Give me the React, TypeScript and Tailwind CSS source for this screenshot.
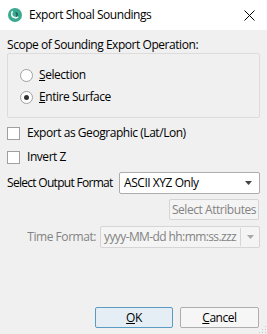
const font = { fontFamily: '"Segoe UI", "Open Sans", "Noto Sans", sans-serif', letterSpacing: '-0.45px' };

function Radio({ checked, label, u }: { checked?: boolean; label: string; u: string }) {
  return (
    <div className="flex items-center h-[22px]">
      <span className="w-[13px] h-[13px] rounded-full border border-[#a0a0a0] bg-white flex items-center justify-center">
        {checked && <span className="w-[5px] h-[5px] rounded-full bg-[#333]" />}
      </span>
      <span className="ml-[6px] text-[#000]">
        <span className="underline">{u}</span>
        {label}
      </span>
    </div>
  );
}

function Check({ label }: { label: string }) {
  return (
    <div className="flex items-center h-[24px]">
      <span className="w-[13px] h-[13px] border border-[#a0a0a0] bg-white" />
      <span className="ml-[7px]">{label}</span>
    </div>
  );
}

function Caret({ color }: { color: string }) {
  return (
    <svg width="7" height="4" viewBox="0 0 7 4">
      <path d="M0 0h7L3.5 4z" fill={color} />
    </svg>
  );
}

export default function App() {
  return (
    <div className="relative w-[267px] h-[334px] bg-[#f0f0f0] flex flex-col text-[12px] text-black whitespace-nowrap" style={font}>
      <div className="h-[30px] bg-white flex items-center pl-[8px] pr-[12px]">
        <svg width="14" height="14" viewBox="0 0 13 13">
          <circle cx="6.5" cy="6.5" r="6.5" fill="#3aa98f" />
          <path d="M4 3.5c-1.5 2-.5 5 2.5 5.5 1 .2 2 0 2.5-.6" stroke="#e8f6f2" strokeWidth="1.6" fill="none" strokeLinecap="round" />
          <path d="M7.5 4.5c1 .6 1.2 2 .6 3" stroke="#1f5f52" strokeWidth="1.3" fill="none" strokeLinecap="round" />
        </svg>
        <span className="ml-[7px] flex-1">Export Shoal Soundings</span>
        <svg width="11" height="11" viewBox="0 0 11 11">
          <path d="M0.5 0.5l10 10M10.5 0.5l-10 10" stroke="#000" strokeWidth="1" />
        </svg>
      </div>
      <div className="flex-1 flex flex-col px-[7px] pt-[6px]">
        <div className="h-[17px] leading-[17px]">Scope of Sounding Export Operation:</div>
        <div className="h-[65px] border border-[#dcdcdc] rounded-[2px] pl-[12px] pt-[10px]">
          <Radio label="election" u="S" />
          <Radio label="ntire Surface" u="E" checked />
        </div>
        <div className="mt-[3px]">
          <Check label="Export as Geographic (Lat/Lon)" />
          <Check label="Invert Z" />
        </div>
        <div className="mt-[3px] flex items-center">
          <span className="w-[112px] tracking-[-0.7px]">Select Output Format</span>
          <div className="w-[141px] h-[22px] border border-[#adadad] rounded-[2px] bg-white flex items-center pl-[4px] pr-[7px]">
            <span className="flex-1">ASCII XYZ Only</span>
            <Caret color="#444" />
          </div>
        </div>
        <div className="mt-[5px] flex justify-end pr-[1px]">
          <div className="w-[90px] h-[21px] border border-[#d5d5d5] rounded-[2px] bg-[#f4f4f4] text-[#838383] flex items-center justify-center">
            Select Attributes
          </div>
        </div>
        <div className="mt-[6px] flex items-center">
          <span className="w-[93px] text-right text-[#838383] pr-[4px]">Time Format:</span>
          <div className="w-[160px] h-[22px] border border-[#d5d5d5] rounded-[2px] bg-[#f4f4f4] flex items-center">
            <span className="flex-1 pl-[3px] text-[#838383] tracking-[-0.6px]">yyyy-MM-dd hh:mm:ss.zzz</span>
            <span className="w-px h-[18px] bg-[#d5d5d5]" />
            <span className="w-[18px] flex justify-center">
              <Caret color="#a8a8a8" />
            </span>
          </div>
        </div>
        <div className="flex-1" />
        <div className="flex justify-end gap-[7px] pb-[6px] pr-[1px]">
          <div className="w-[78px] h-[21px] border border-[#5a9bc4] rounded-[2px] bg-[#e5eef5] flex items-center justify-center">
            <span><span className="underline">O</span>K</span>
          </div>
          <div className="w-[79px] h-[21px] border border-[#adadad] rounded-[2px] bg-[#f6f6f6] flex items-center justify-center">
            <span><span className="underline">C</span>ancel</span>
          </div>
        </div>
      </div>
      <svg className="absolute right-0 bottom-0" width="10" height="10" viewBox="0 0 10 10">
        <g fill="#c8c8c8">
          <rect x="8" y="2" width="1" height="1" />
          <rect x="5" y="5" width="1" height="1" />
          <rect x="8" y="5" width="1" height="1" />
          <rect x="2" y="8" width="1" height="1" />
          <rect x="5" y="8" width="1" height="1" />
          <rect x="8" y="8" width="1" height="1" />
        </g>
      </svg>
    </div>
  );
}
